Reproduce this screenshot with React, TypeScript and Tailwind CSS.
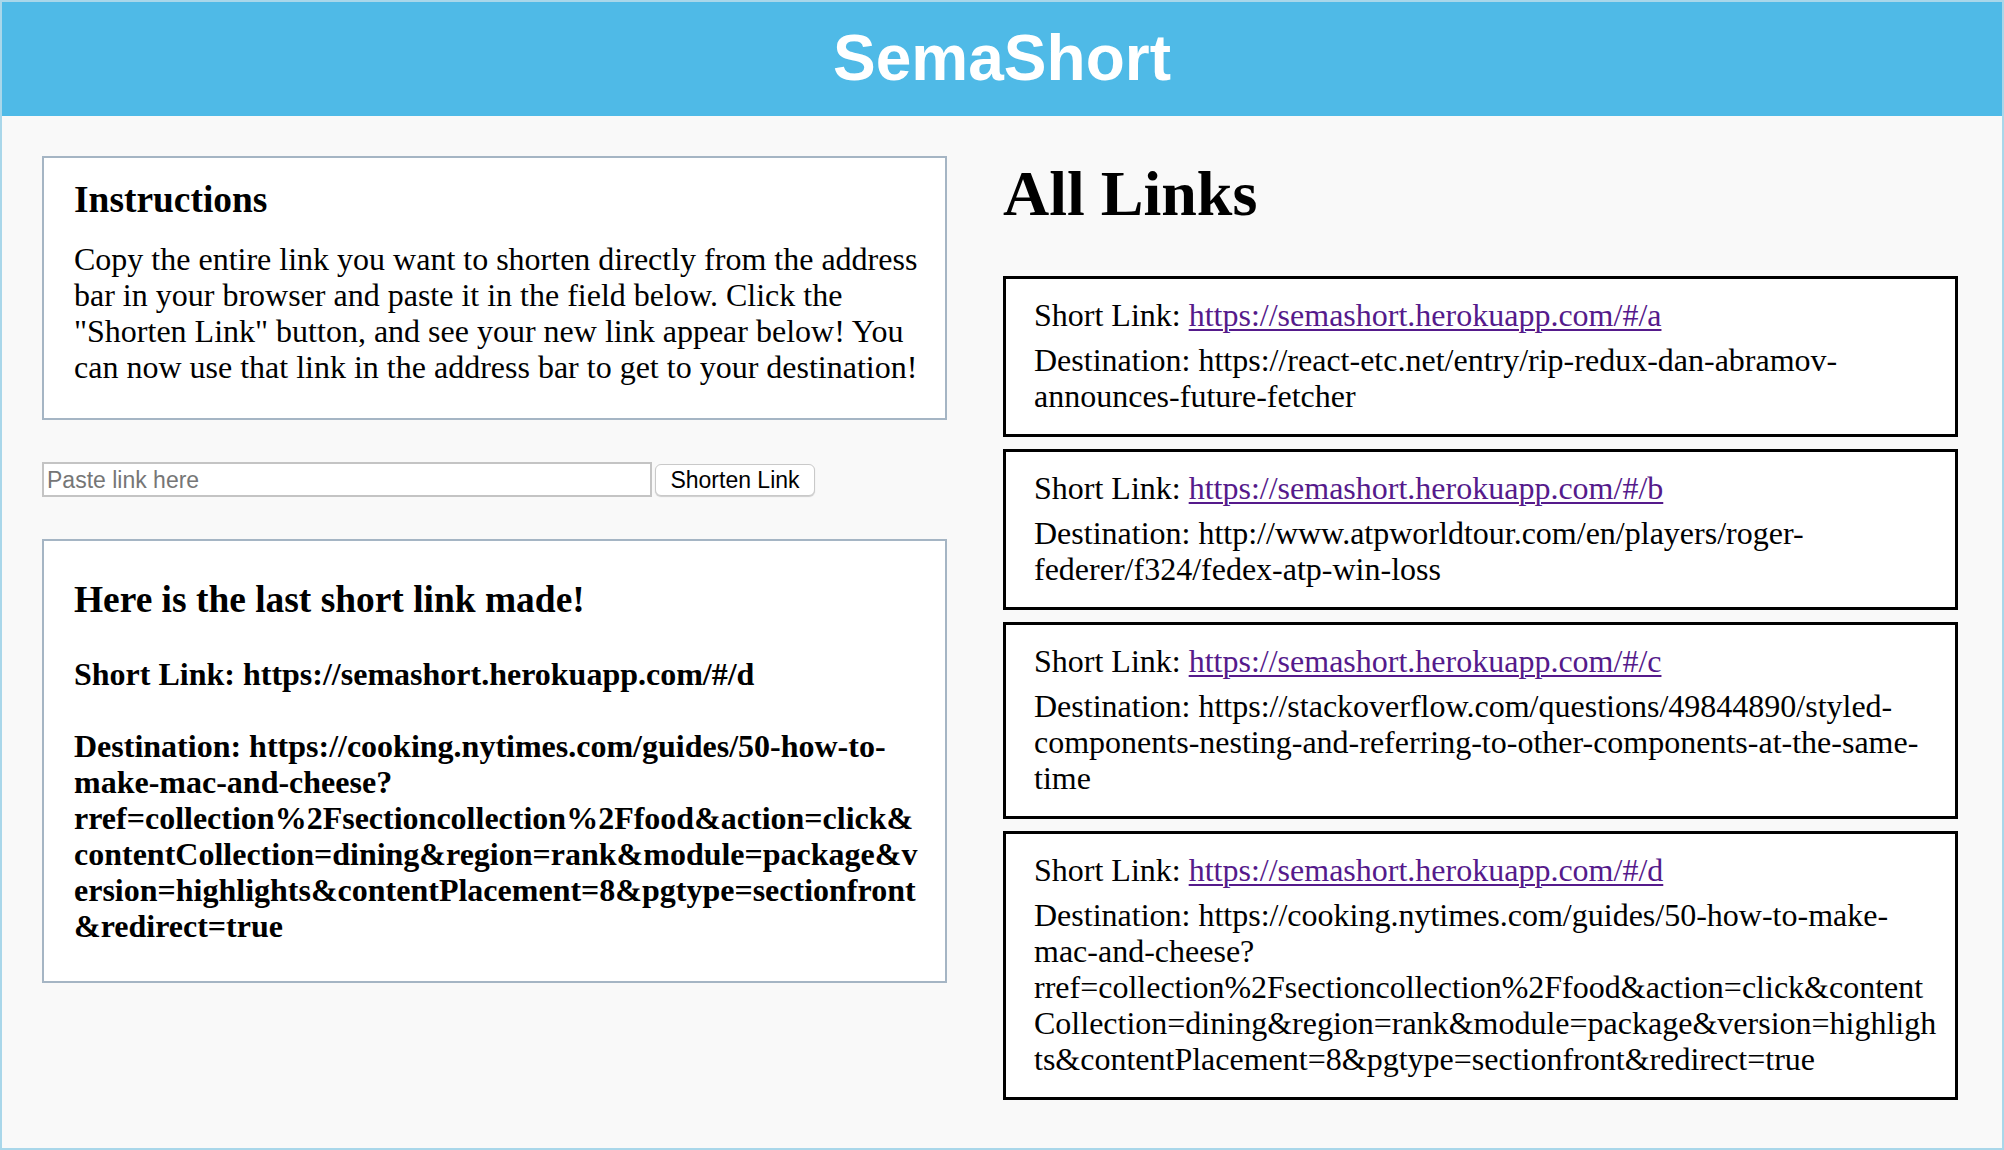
import React from "react";

const serif = "font-['Liberation_Serif','Times_New_Roman',serif]";

const links = [
  {
    short: "https://semashort.herokuapp.com/#/a",
    dest: [
      "Destination: https://react-etc.net/entry/rip-redux-dan-abramov-",
      "announces-future-fetcher",
    ],
  },
  {
    short: "https://semashort.herokuapp.com/#/b",
    dest: [
      "Destination: http://www.atpworldtour.com/en/players/roger-",
      "federer/f324/fedex-atp-win-loss",
    ],
  },
  {
    short: "https://semashort.herokuapp.com/#/c",
    dest: [
      "Destination: https://stackoverflow.com/questions/49844890/styled-",
      "components-nesting-and-referring-to-other-components-at-the-same-",
      "time",
    ],
  },
  {
    short: "https://semashort.herokuapp.com/#/d",
    dest: [
      "Destination: https://cooking.nytimes.com/guides/50-how-to-make-",
      "mac-and-cheese?",
      "rref=collection%2Fsectioncollection%2Ffood&action=click&content",
      "Collection=dining&region=rank&module=package&version=highligh",
      "ts&contentPlacement=8&pgtype=sectionfront&redirect=true",
    ],
  },
];

const instructions = [
  "Copy the entire link you want to shorten directly from the address",
  "bar in your browser and paste it in the field below. Click the",
  "\"Shorten Link\" button, and see your new link appear below! You",
  "can now use that link in the address bar to get to your destination!",
];

const lastDest = [
  "Destination: https://cooking.nytimes.com/guides/50-how-to-",
  "make-mac-and-cheese?",
  "rref=collection%2Fsectioncollection%2Ffood&action=click&",
  "contentCollection=dining&region=rank&module=package&v",
  "ersion=highlights&contentPlacement=8&pgtype=sectionfront",
  "&redirect=true",
];

export default function App() {
  return (
    <div className={`w-[2004px] h-[1150px] border-2 border-[#a9d7ea] bg-[#f9f9f9] text-black ${serif} overflow-hidden`}>
      <header className="h-[114px] bg-[#4fbae7] flex items-center justify-center">
        <h1 className="text-[64px] leading-[73.5px] font-bold text-white font-['Liberation_Sans',Arial,sans-serif]">
          SemaShort
        </h1>
      </header>

      <div className="flex pl-[40px] pt-[40px] gap-[56px]">
        {/* Left column */}
        <div className="w-[905px] flex flex-col">
          <section className="bg-white border-2 border-[#a5b5c4] pl-[30px] pt-[20px] pb-[33px]">
            <h3 className="text-[37.44px] leading-[43px] font-bold">Instructions</h3>
            <div className="mt-[20px] text-[32px] leading-[36px]">
              {instructions.map((l, i) => (
                <div key={i} className="whitespace-nowrap">{l}</div>
              ))}
            </div>
          </section>

          <div className="mt-[42px] flex items-center gap-[3px]">
            <input
              type="text"
              placeholder="Paste link here"
              className="w-[610px] h-[35px] border-2 border-[#c4c4c4] bg-white px-[3px] pt-[2px] text-[23px] font-['Liberation_Sans',Arial,sans-serif] placeholder:text-[#767676] outline-none"
            />
            <button className="w-[160px] h-[32px] bg-white border border-[#c9c9c9] rounded-[6px] shadow-[0_1px_1px_rgba(0,0,0,0.18)] pt-[2px] text-[23px] leading-none text-black font-['Liberation_Sans',Arial,sans-serif]">
              Shorten Link
            </button>
          </div>

          <section className="mt-[42px] bg-white border-2 border-[#a5b5c4] pl-[30px] pt-[36.5px] pb-[37px]">
            <h3 className="text-[37.44px] leading-[43px] font-bold">Here is the last short link made!</h3>
            <p className="mt-[35.3px] text-[32px] leading-[36px] font-bold whitespace-nowrap">
              Short Link: https://semashort.herokuapp.com/#/d
            </p>
            <div className="mt-[36px] text-[32px] leading-[36px] font-bold">
              {lastDest.map((l, i) => (
                <div key={i} className="whitespace-nowrap">{l}</div>
              ))}
            </div>
          </section>
        </div>

        {/* Right column */}
        <div className="w-[955px] flex flex-col">
          <h1 className="mt-[1px] text-[64px] leading-[74px] font-bold">All Links</h1>
          <div className="mt-[45px] flex flex-col gap-[12px]">
            {links.map((lk, i) => (
              <div key={i} className="bg-white border-[3px] border-black pl-[28px] pt-[17.5px] pb-[20px] text-[32px] leading-[36px]">
                <div className="whitespace-nowrap">
                  Short Link:{" "}
                  <a href="#" className="text-[#551a8b] underline decoration-[2px] underline-offset-[3px]">
                    {lk.short}
                  </a>
                </div>
                <div className="mt-[9.5px]">
                  {lk.dest.map((l, j) => (
                    <div key={j} className="whitespace-nowrap">{l}</div>
                  ))}
                </div>
              </div>
            ))}
          </div>
        </div>
      </div>
    </div>
  );
}
